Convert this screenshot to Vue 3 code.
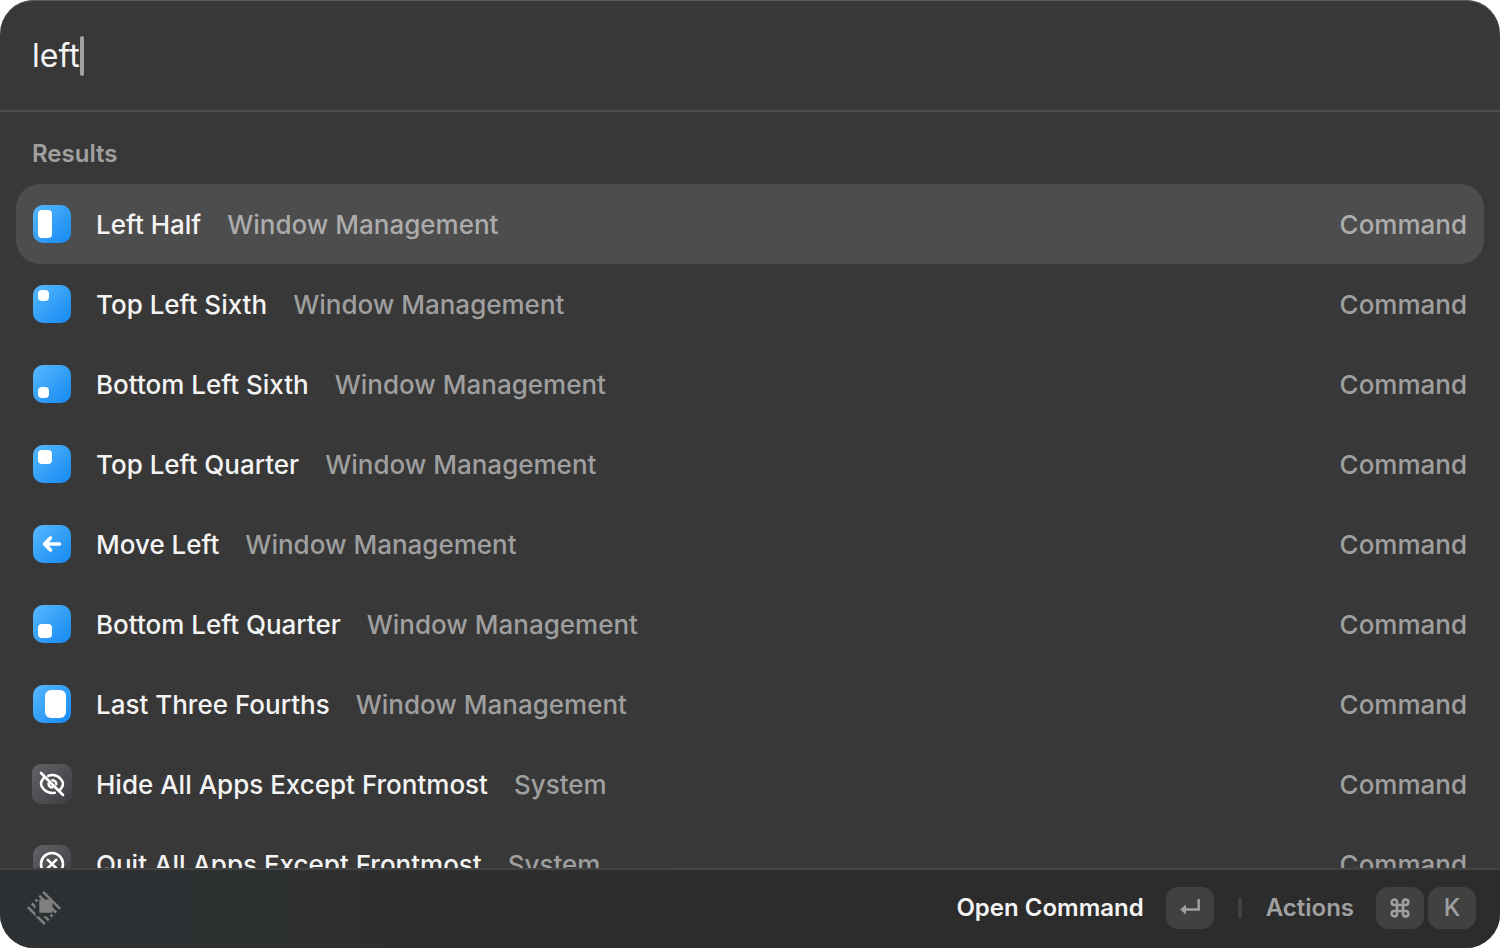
<script setup>
import { ref } from 'vue'

const query = ref('left')
const selected = ref(0)

const wm = 'Window Management'
const items = [
  { title: 'Left Half', group: wm, pane: [5, 5, 14, 28] },
  { title: 'Top Left Sixth', group: wm, pane: [5, 5, 11, 11] },
  { title: 'Bottom Left Sixth', group: wm, pane: [5, 22, 11, 11] },
  { title: 'Top Left Quarter', group: wm, pane: [5, 5, 14, 14] },
  { title: 'Move Left', group: wm, icon: 'arrow' },
  { title: 'Bottom Left Quarter', group: wm, pane: [5, 19, 14, 14] },
  { title: 'Last Three Fourths', group: wm, pane: [12, 5, 21, 28] },
  { title: 'Hide All Apps Except Frontmost', group: 'System', icon: 'hide' },
  { title: 'Quit All Apps Except Frontmost', group: 'System', icon: 'quit' }
]
</script>

<template>
  <main class="palette">
    <header class="search">
      <input v-model="query" class="query" type="text" aria-label="Search" spellcheck="false" />
      <span class="caret"></span>
    </header>

    <section class="results">
      <h2 class="heading">Results</h2>
      <ul class="list">
        <li v-for="(item, i) in items" :key="item.title">
          <button class="row" :class="{ active: i === selected }" type="button" @click="selected = i">
            <svg class="icon" viewBox="0 0 40 40" aria-hidden="true">
              <defs>
                <linearGradient :id="'fill' + i" x1="0" y1="0" x2="1" y2="1">
                  <stop offset="0" :stop-color="item.group === wm ? '#56b9ff' : '#626366'" />
                  <stop offset="1" :stop-color="item.group === wm ? '#1588f2' : '#3b3c3f'" />
                </linearGradient>
              </defs>
              <rect v-if="item.icon === 'hide'" width="40" height="40" rx="9" :fill="`url(#fill${i})`" />
              <rect v-else x="1" y="1" width="38" height="38" rx="10" :fill="`url(#fill${i})`" />
              <rect
                v-if="item.pane"
                :x="item.pane[0] + 1"
                :y="item.pane[1] + 1"
                :width="item.pane[2]"
                :height="item.pane[3]"
                :rx="item.pane[2] > 20 ? 6 : 4"
                fill="#fff"
              />
              <path v-else-if="item.icon === 'arrow'" class="stroke bold" d="M27.5 20H12.5M18.5 14 12.5 20l6 6" />
              <g v-else-if="item.icon === 'hide'" class="stroke">
                <path d="M9 9 31 31" />
                <path d="M11.6 14.2C10 16 9 18.2 9 20c0 3 4.500 9 11.500 9 .8 0 1.600-.1 2.300-.2" />
                <path d="M16.300 11.900C17.600 11.300 19 11 20.500 11 27 11 31 17 31 20c0 1.700-1.100 3.800-2.700 5.500" />
                <path d="M20.500 16.200c2.200 0 3.800 1.700 3.800 3.900M16.600 19.500c0 2.200 1.600 3.900 3.700 3.900" />
              </g>
              <g v-else class="stroke">
                <circle cx="20" cy="20" r="11" />
                <path d="m15.800 15.800 8.400 8.400M24.200 15.800l-8.400 8.400" />
              </g>
            </svg>
            <span class="title">{{ item.title }}</span>
            <span class="group">{{ item.group }}</span>
            <span class="kind">Command</span>
          </button>
        </li>
      </ul>
    </section>

    <footer class="bar">
      <svg class="logo" viewBox="0 0 28 28" aria-hidden="true">
        <path d="M7 18.079V21L0 14L1.46 12.540L7 18.080V18.079ZM9.921 21H7L14 28L15.460 26.540L9.921 21ZM26.535 15.462L27.996 14L13.996 0L12.538 1.466L18.077 7.004H14.730L10.864 3.146L9.404 4.606L11.809 7.010H10.129V17.876H20.994V16.194L23.399 18.600L24.859 17.140L20.994 13.274V9.927L26.535 15.462ZM7.730 6.276L6.265 7.738L7.833 9.304L9.294 7.844L7.730 6.276ZM20.162 18.708L18.702 20.170L20.268 21.738L21.730 20.276L20.162 18.708ZM4.596 9.410L3.134 10.872L7 14.738V11.815L4.596 9.410ZM16.192 21.006H13.268L17.134 24.872L18.596 23.410L16.192 21.006Z" />
      </svg>
      <button class="action primary" type="button">
        <span>Open Command</span>
        <kbd class="key">
          <svg viewBox="0 0 24 24" aria-hidden="true">
            <path class="line" d="M20.700 3v10.500H7" />
            <path d="M8 8.500v10L2 13.500z" />
          </svg>
        </kbd>
      </button>
      <span class="divider"></span>
      <button class="action" type="button">
        <span>Actions</span>
        <span class="keys">
          <kbd class="key">
            <svg viewBox="0 0 24 24" aria-hidden="true">
              <path class="line" d="M9 9h6v6H9zM9 9H6.300A2.700 2.700 0 1 1 9 6.300zM15 9V6.300A2.700 2.700 0 1 1 17.700 9zM15 15h2.700A2.700 2.700 0 1 1 15 17.700zM9 15v2.700A2.700 2.700 0 1 1 6.300 15z" />
            </svg>
          </kbd>
          <kbd class="key">K</kbd>
        </span>
      </button>
    </footer>
  </main>
</template>

<style>
body {
  background: #fff;
}
</style>

<style scoped>
.palette {
  box-sizing: border-box;
  display: flex;
  flex-direction: column;
  height: 100vh;
  overflow: hidden;
  border-radius: 34px;
  background: #383838;
  box-shadow: inset 0 1px #5c5c5c;
  color: #f4f4f4;
  font-family: Inter, "Liberation Sans", sans-serif;
  font-size: 26px;
  line-height: 32px;
}

.search {
  display: flex;
  align-items: center;
  flex: none;
  height: 108px;
  padding: 2px 32px 0;
  border-bottom: 2px solid #4d4d4d;
}

.query {
  field-sizing: content;
  padding: 0;
  border: 0;
  outline: 0;
  background: none;
  color: inherit;
  font: 400 32px/40px Inter, "Liberation Sans", sans-serif;
}

.caret {
  width: 4px;
  height: 40px;
  border-radius: 2px;
  background: #a0a0a0;
}

.results {
  flex: 1;
  min-height: 0;
  overflow: hidden;
  padding: 0 16px;
}

.heading {
  margin: 0;
  padding: 26px 16px 14px;
  color: #a0a0a0;
  font-size: 24px;
  font-weight: 600;
  line-height: 32px;
}

.list {
  margin: 0;
  padding: 0;
  list-style: none;
}

.row {
  display: flex;
  align-items: center;
  width: 100%;
  height: 80px;
  padding: 0 16px;
  border: 0;
  border-radius: 24px;
  background: none;
  color: inherit;
  font: inherit;
  font-weight: 500;
  text-align: left;
  white-space: nowrap;
}

.row.active {
  background: #4d4d4d;
}

.row span {
  padding-top: 2px;
}

.icon {
  flex: none;
  width: 40px;
  height: 40px;
  margin-right: 24px;
}

.stroke {
  fill: none;
  stroke: #fff;
  stroke-width: 2.6;
  stroke-linecap: round;
  stroke-linejoin: round;
}

.stroke.bold {
  stroke-width: 3.6;
}

.group {
  margin-left: 26px;
  color: #9f9f9f;
}

.kind {
  margin-left: auto;
  padding-right: 1px;
  color: #9f9f9f;
}

.active .group,
.active .kind {
  color: #acacac;
}

.bar {
  display: flex;
  align-items: center;
  flex: none;
  height: 76px;
  padding: 0 24px 2px 27px;
  border-top: 2px solid #434343;
  background: linear-gradient(90deg, #2d3133, #2c2c2c 45%);
}

.logo {
  width: 34px;
  height: 34px;
  margin-right: auto;
  fill: #808080;
}

.action {
  display: flex;
  align-items: center;
  gap: 22px;
  padding: 0;
  border: 0;
  background: none;
  color: #a0a0a0;
  font: inherit;
  font-size: 24px;
  font-weight: 600;
}

.action.primary {
  color: #f4f4f4;
}

.keys {
  display: flex;
  gap: 4px;
}

.key {
  display: flex;
  align-items: center;
  justify-content: center;
  width: 48px;
  height: 42px;
  border-radius: 12px;
  background: #414141;
  color: #a0a0a0;
  font-family: inherit;
  font-size: 24px;
  font-weight: 500;
}

.key svg {
  width: 24px;
  height: 24px;
  fill: #a0a0a0;
}

.key .line {
  fill: none;
  stroke: #a0a0a0;
  stroke-width: 2.5;
}

.divider {
  width: 4px;
  height: 22px;
  margin: 0 24px;
  border-radius: 2px;
  background: #414141;
}
</style>
